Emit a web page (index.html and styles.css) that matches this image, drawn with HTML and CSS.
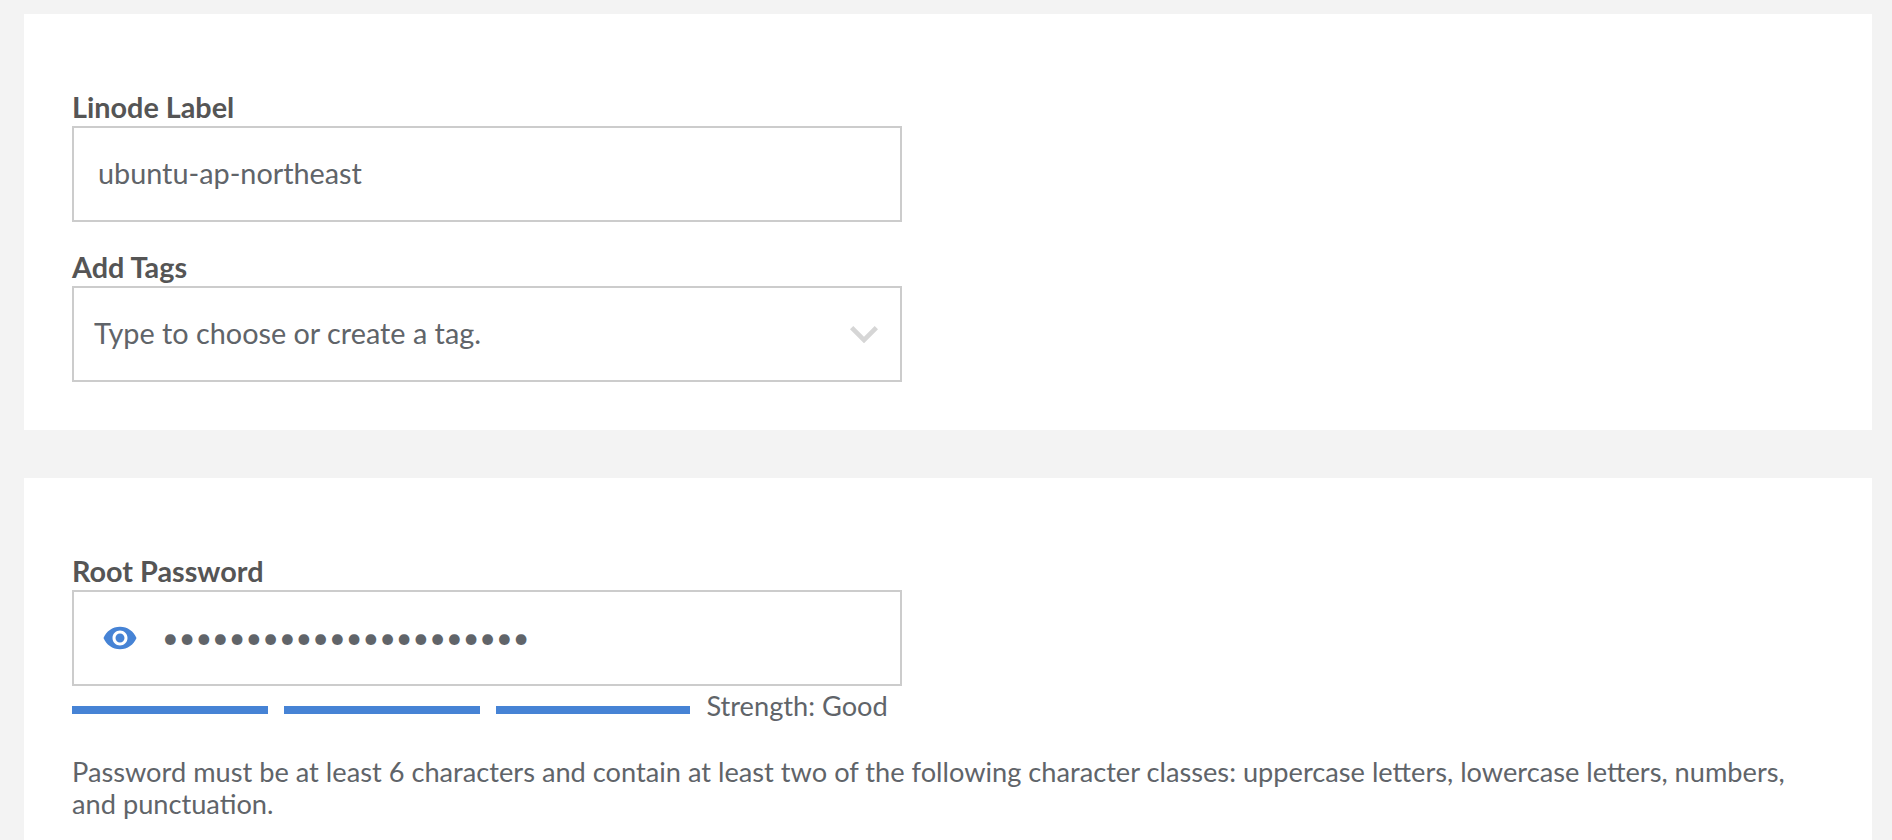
FILE: index.html
```html
<!DOCTYPE html>
<html lang="en">
<head>
<meta charset="utf-8">
<title>Create Linode</title>
<link rel="stylesheet" href="styles.css">
</head>
<body>
<main class="page">
  <section class="panel">
    <div class="field">
      <div class="label">Linode Label</div>
      <div class="control"><span class="value">ubuntu-ap-northeast</span></div>
    </div>
    <div class="field">
      <div class="label">Add Tags</div>
      <div class="control select">
        <span class="value">Type to choose or create a tag.</span>
        <svg class="chevron" viewBox="6 7.84 12 7.41"><path d="M7.41 7.84L12 12.42l4.59-4.58L18 9.25l-6 6-6-6z"/></svg>
      </div>
    </div>
  </section>
  <section class="panel">
    <div class="field">
      <div class="label">Root Password</div>
      <div class="control password">
        <svg class="eye" viewBox="0 0 24 24"><path d="M12 4.5C7 4.5 2.73 7.61 1 12c1.73 4.39 6 7.5 11 7.5s9.27-3.11 11-7.5c-1.73-4.39-6-7.5-11-7.5zM12 17c-2.76 0-5-2.24-5-5s2.24-5 5-5 5 2.24 5 5-2.24 5-5 5zm0-8c-1.66 0-3 1.34-3 3s1.34 3 3 3 3-1.34 3-3-1.34-3-3-3z"/></svg>
        <span class="value">••••••••••••••••••••••</span>
      </div>
      <div class="strength">
        <span class="bar"></span>
        <span class="bar"></span>
        <span class="bar"></span>
        <span class="strength-text">Strength: Good</span>
      </div>
    </div>
    <p class="help">Password must be at least 6 characters and contain at least two of the following character classes: uppercase letters, lowercase letters, numbers, and punctuation.</p>
  </section>
</main>
</body>
</html>
```
FILE: styles.css
```css
* {
  box-sizing: border-box;
}

body {
  margin: 0;
  height: 840px;
  overflow: hidden;
  background: #f3f3f3;
  color: #606469;
  font-family: Lato, sans-serif;
}

.page {
  display: flex;
  flex-direction: column;
  gap: 48px;
  padding: 14px 20px 0 24px;
}

.panel {
  padding: 76px 48px 48px;
  background: #fff;
}

.field + .field {
  margin-top: 28px;
}

.field {
  width: 830px;
}

.label {
  height: 36px;
  color: #555;
  font-size: 28.8px;
  font-weight: 700;
  line-height: 34px;
}

.control {
  display: flex;
  align-items: center;
  height: 96px;
  padding: 0 24px;
  border: 2px solid #ccc;
  font-size: 28.8px;
  line-height: 36px;
}

.value {
  padding-bottom: 2px;
}

.select {
  justify-content: space-between;
  padding: 0 22px 0 20px;
}

.chevron {
  width: 28px;
  height: 17.3px;
  margin-top: 1px;
  fill: #d6d6d6;
}

.password {
  gap: 24px;
  padding-left: 28px;
}

.eye {
  width: 36px;
  height: 36px;
  fill: #4683d5;
}

.strength {
  display: grid;
  grid-template-columns: 196px 196px 194px auto;
  column-gap: 16px;
  align-items: center;
  height: 48px;
}

.bar {
  height: 8px;
  background: #4683d5;
}

.strength-text {
  margin-bottom: 8px;
  padding-left: 0.4px;
  font-size: 27.2px;
  line-height: 32px;
}

.help {
  margin: 22px 0 0;
  font-size: 27.2px;
  line-height: 32px;
  word-spacing: 0.05px;
}
```
